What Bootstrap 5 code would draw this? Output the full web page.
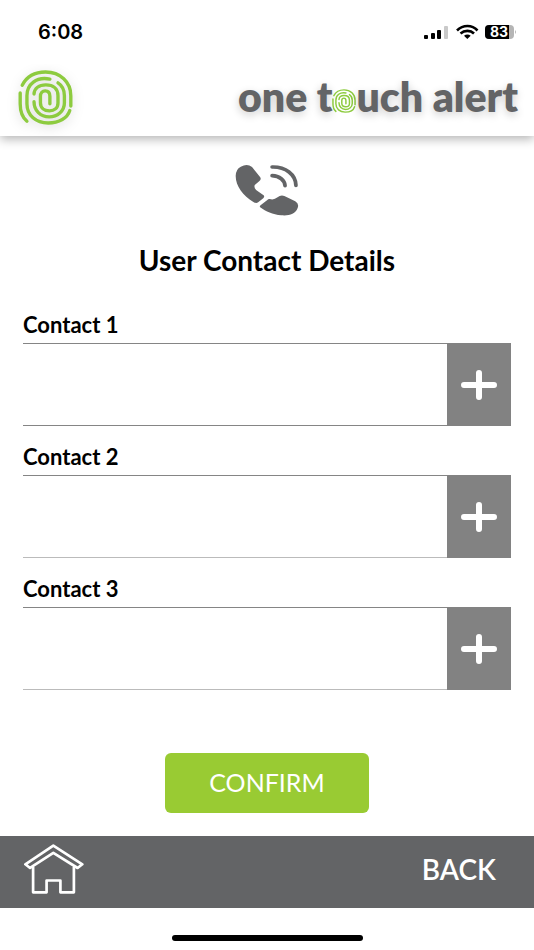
<!DOCTYPE html>
<html lang="en">
<head>
<meta charset="utf-8">
<meta name="viewport" content="width=device-width, initial-scale=1">
<title>User Contact Details</title>
<link href="https://cdn.jsdelivr.net/npm/bootstrap@5.3.0/dist/css/bootstrap.min.css" rel="stylesheet">
<style>
  body { font-family: Lato, "Open Sans", sans-serif; color: #000; background: #fff; }
  .status-bar { height: 64px; padding: 0 16px 0 38px; font-family: Inter, sans-serif; }
  .clock { font-size: 20px; line-height: 24px; font-weight: 600; }
  .brand-bar { height: 72px; padding: 0 16px 6px 18px; box-shadow: 0 3px 10px rgba(0,0,0,.3); clip-path: inset(0 0 -20px 0); }
  .print-logo { filter: drop-shadow(0 3px 6px rgba(0,0,0,.15)); }
  .wordmark { font-size: 41px; line-height: 48px; font-weight: 800; color: #636466; text-shadow: 0 3px 8px rgba(0,0,0,.2); }
  .page-title { font-size: 28px; line-height: 32px; font-weight: 700; margin: 28px 0 35px; }
  .phone-icon { margin-top: 28px; }
  .contact-form { padding: 0 23px; }
  .contact-label { font-size: 22px; line-height: 28px; font-weight: 700; margin-bottom: 4px; }
  .contact-row { height: 83px; margin-bottom: 17px; }
  .contact-row .form-control { border: solid #858585; border-width: 1px 0; border-radius: 0; font-size: 22px; }
  #contact2, #contact3 { border-bottom-color: #bbb; }
  .add-btn { width: 64px; background: #828282; border-radius: 0; }
  .add-btn:hover { background: #707070; }
  .confirm-btn { width: 204px; height: 60px; margin-top: 46px; background: #99cb33; color: #fff; font-size: 25px; border-radius: 6px; }
  .confirm-btn:hover { background: #88b82a; color: #fff; }
  .bottom-bar { height: 72px; padding: 0 38px 6px 24px; background: #636466; }
  .back-link { font-size: 28px; line-height: 32px; font-weight: 600; }
  .home-area { height: 42px; padding-bottom: 9px; }
  .home-indicator { width: 191px; height: 6px; border-radius: 3px; background: #000; }
</style>
</head>
<body class="d-flex flex-column min-vh-100">
<svg class="d-none" aria-hidden="true">
  <symbol id="fingerprint" viewBox="56 30 162 163">
    <g fill="none" stroke="#8dcb3f" stroke-width="10" stroke-linecap="round">
      <path d="M68 75C81 50 106 36 137 36C181 36 212 66 212 106V137"/>
      <path d="M62 98V130C62 154 70 172 82 182"/>
      <path d="M150 57C110 49 82 72 82 106V130C82 165 109 187 145 187C178 187 202 172 209 150"/>
      <path d="M174 68C188 77 193 90 193 106V128C193 152 172 169 148 169C122 169 103 150 103 124"/>
      <path d="M103 101C104 84 118 74 138 74C160 74 174 86 174 106V128C174 143 163 151 149 151C133 151 122 142 122 127V108C122 98 128 92 136 92C145 92 150 98 150 108V130"/>
    </g>
  </symbol>
  <symbol id="plus" viewBox="0 0 36 30">
    <path d="M18 3V27M3 15H33" fill="none" stroke="#fff" stroke-width="6" stroke-linecap="round"/>
  </symbol>
</svg>

<div class="status-bar d-flex align-items-center justify-content-between">
  <span class="clock">6:08</span>
  <svg width="94" height="18" viewBox="0 0 94 18" role="img" aria-label="Signal, Wi-Fi, battery 83 percent">
    <rect x="0" y="12" width="4" height="4" rx="1"/>
    <rect x="7" y="10" width="4" height="6" rx="1"/>
    <rect x="13" y="7" width="4" height="9" rx="1"/>
    <rect x="20" y="3" width="4" height="13" rx="1" fill="#c9c9c9"/>
    <g fill="none" stroke="#000" stroke-width="2.600">
      <path d="M33 7.500C39 1.500 48 1.500 53.500 7.500"/>
      <path d="M36.500 10.500C40.500 7 46.500 7 50 10.500"/>
    </g>
    <path d="M43.300 16L40 12.700C42 11 44.800 11 46.700 12.700Z"/>
    <path d="M65 2H86Q90 2 90 6V12Q90 16 86 16H65Q61 16 61 12V6Q61 2 65 2Z" fill="#b5b5b5"/>
    <path d="M65 2H85V16H65Q61 16 61 12V6Q61 2 65 2Z"/>
    <path d="M91 7Q93 9 91 11Z" fill="#b5b5b5"/>
    <text x="75" y="14" text-anchor="middle" font-size="14" font-weight="700" fill="#fff">83</text>
  </svg>
</div>

<header class="brand-bar d-flex align-items-center justify-content-between bg-white">
  <svg class="print-logo" width="55" height="55" role="img" aria-label="Fingerprint logo"><use href="#fingerprint"/></svg>
  <div class="wordmark d-flex align-items-center" aria-label="one touch alert">
    <span>one&nbsp;t</span><svg class="mt-2" width="24" height="24"><use href="#fingerprint"/></svg><span>uch alert</span>
  </div>
</header>

<main class="flex-grow-1 d-flex flex-column align-items-center">
  <svg class="phone-icon" width="64" height="52" viewBox="48 28 188 156" preserveAspectRatio="none" aria-hidden="true">
    <path d="M65 36Q84 26 98 37L121 66Q127 73 119 80L106 91Q103 98 110 106L132 122Q136 126 131 131L116 143Q110 147 102 142C72 124 50 94 50 64Q50 44 65 36Z" fill="#636466"/>
    <path d="M150 133Q162 137 173 128Q182 120 193 124L225 140Q237 147 232 160C225 179 206 184 184 182C158 180 139 171 122 158Q119 154 124 151L143 136Q146 132 150 133Z" fill="#636466"/>
    <path d="M157 63C179 64 194 77 195 93M157 37C197 36 226 60 227 92" fill="none" stroke="#636466" stroke-width="11" stroke-linecap="round"/>
  </svg>
  <h1 class="page-title text-center">User Contact Details</h1>

  <form class="contact-form w-100">
    <label class="contact-label d-block" for="contact1">Contact 1</label>
    <div class="contact-row d-flex">
      <input class="form-control flex-grow-1" type="text" id="contact1">
      <button class="add-btn btn border-0 p-0 flex-shrink-0" type="button" aria-label="Add contact 1"><svg width="36" height="30"><use href="#plus"/></svg></button>
    </div>
    <label class="contact-label d-block" for="contact2">Contact 2</label>
    <div class="contact-row d-flex">
      <input class="form-control flex-grow-1" type="text" id="contact2">
      <button class="add-btn btn border-0 p-0 flex-shrink-0" type="button" aria-label="Add contact 2"><svg width="36" height="30"><use href="#plus"/></svg></button>
    </div>
    <label class="contact-label d-block" for="contact3">Contact 3</label>
    <div class="contact-row d-flex">
      <input class="form-control flex-grow-1" type="text" id="contact3">
      <button class="add-btn btn border-0 p-0 flex-shrink-0" type="button" aria-label="Add contact 3"><svg width="36" height="30"><use href="#plus"/></svg></button>
    </div>
    <div class="text-center">
      <button class="confirm-btn btn border-0 p-0" type="submit">CONFIRM</button>
    </div>
  </form>
</main>

<footer>
  <nav class="bottom-bar d-flex align-items-center justify-content-between">
    <a href="#" aria-label="Home"><svg class="d-block" width="60" height="50" viewBox="74 58 178 148" preserveAspectRatio="none">
      <g fill="none" stroke="#fff" stroke-width="8" stroke-linejoin="round">
        <path d="M161 63L247 118L233 129L161 84L92 129L78 118Z"/>
        <path d="M101 126V201H141V166H182V201H222V126"/>
      </g>
    </svg></a>
    <a class="back-link text-white text-decoration-none" href="#">BACK</a>
  </nav>
  <div class="home-area d-flex align-items-end justify-content-center"><div class="home-indicator"></div></div>
</footer>
<script src="https://cdn.jsdelivr.net/npm/bootstrap@5.3.0/dist/js/bootstrap.bundle.min.js"></script>
</body>
</html>
